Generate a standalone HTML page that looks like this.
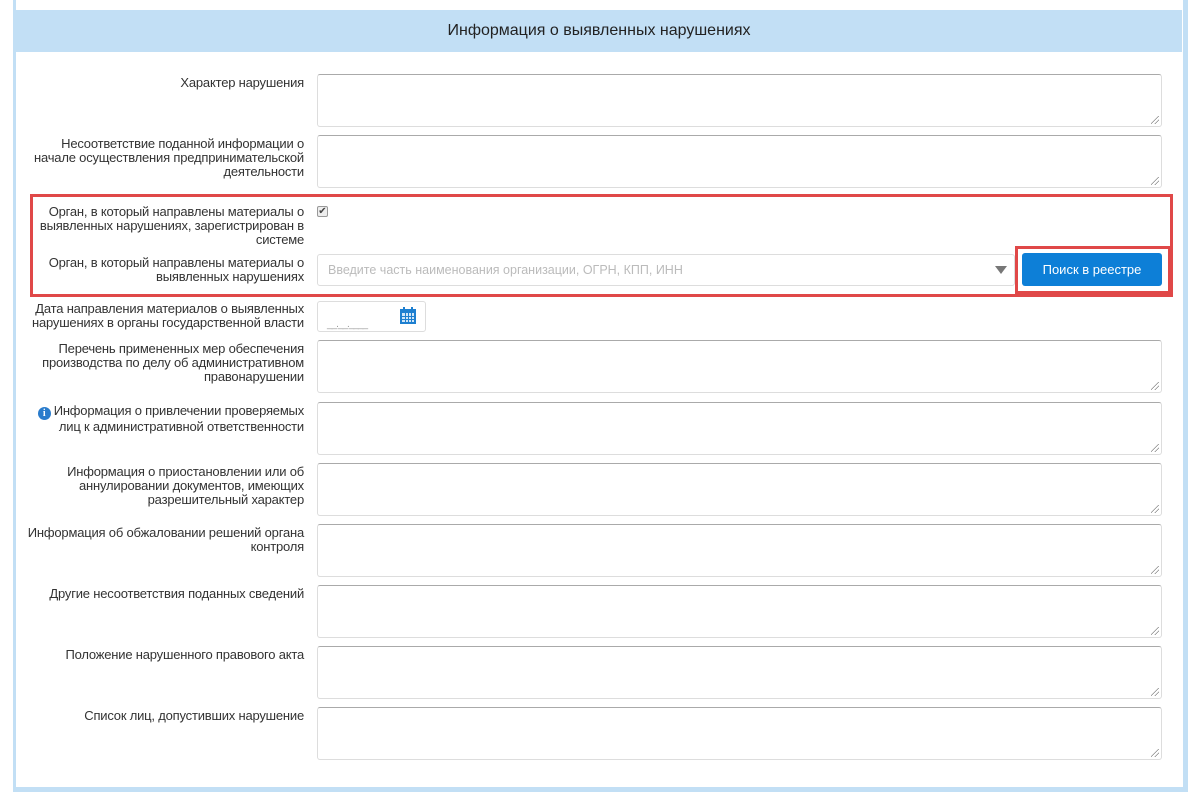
<!DOCTYPE html>
<html><head><meta charset="utf-8"><style>
*{box-sizing:border-box;margin:0;padding:0}
body{width:1188px;height:792px;background:#fff;position:relative;overflow:hidden;font-family:"Liberation Sans",sans-serif;color:#333}
.ob{position:absolute;background:#c2dff5}
.hdr{position:absolute;left:16px;top:10px;width:1166px;height:42px;background:#c2dff5;text-align:center;line-height:42px;font-size:16px;color:#222}
.lbl{position:absolute;right:884px;text-align:right;font-size:13px;line-height:14px;color:#333;white-space:nowrap;letter-spacing:-0.2px}
.ta{position:absolute;left:317px;width:845px;height:53px;border:1px solid #ddd;border-top-color:#aaa;border-radius:3px;background:#fff}
.ta::after{content:"";position:absolute;right:2px;bottom:2px;width:8px;height:8px;background:linear-gradient(135deg,transparent 45%,#888 45%,#888 52%,transparent 52%,transparent 70%,#888 70%,#888 77%,transparent 77%)}
.red{position:absolute;border:3px solid #e04848}
</style></head><body>
<div class="ob" style="left:13px;top:0;width:3px;height:792px"></div>
<div class="ob" style="left:1183px;top:0;width:5px;height:792px"></div>
<div class="ob" style="left:13px;top:787px;width:1175px;height:5px"></div>
<div class="hdr">Информация о выявленных нарушениях</div>

<div class="lbl" style="top:76px">Характер нарушения</div>
<div class="ta" style="top:74px"></div>

<div class="lbl" style="top:137px">Несоответствие поданной информации о<br>начале осуществления предпринимательской<br>деятельности</div>
<div class="ta" style="top:135px"></div>

<div class="red" style="left:30px;top:194px;width:1143px;height:103px"></div>
<div class="lbl" style="top:205px">Орган, в который направлены материалы о<br>выявленных нарушениях, зарегистрирован в<br>системе</div>
<div style="position:absolute;left:317px;top:206px;width:11px;height:11px;border:1px solid #999;border-radius:2px;background:#eee;font-size:10px;line-height:9px;text-align:center;color:#444">✔</div>
<div class="lbl" style="top:256px">Орган, в который направлены материалы о<br>выявленных нарушениях</div>
<div style="position:absolute;left:317px;top:254px;width:698px;height:32px;border:1px solid #ddd;border-radius:3px;font-size:12.5px;line-height:30px;padding-left:10px;color:#bbb">Введите часть наименования организации, ОГРН, КПП, ИНН</div>
<div style="position:absolute;left:995px;top:266px;width:0;height:0;border-left:6px solid transparent;border-right:6px solid transparent;border-top:8px solid #777"></div>
<div class="red" style="left:1015px;top:246px;width:156px;height:48px"></div>
<div style="position:absolute;left:1022px;top:253px;width:140px;height:33px;background:#0d7fd7;border-radius:3px;color:#fff;font-size:13px;line-height:33px;text-align:center">Поиск в реестре</div>

<div class="lbl" style="top:302px">Дата направления материалов о выявленных<br>нарушениях в органы государственной власти</div>
<div style="position:absolute;left:317px;top:301px;width:109px;height:31px;border:1px solid #ddd;border-radius:3px"></div>
<div style="position:absolute;left:327px;top:319px;font-size:10px;color:#999;letter-spacing:-1px">__.__.____</div>
<svg style="position:absolute;left:400px;top:307px" width="16" height="17" viewBox="0 0 16 17"><rect x="0" y="2" width="16" height="15" fill="#1d7fd0"/><rect x="3" y="0" width="2" height="4" fill="#1d7fd0"/><rect x="11" y="0" width="2" height="4" fill="#1d7fd0"/><g fill="#cfe5f7"><rect x="2" y="6" width="12" height="9"/></g><g fill="#1d7fd0"><rect x="5" y="6" width="1" height="9"/><rect x="8" y="6" width="1" height="9"/><rect x="11" y="6" width="1" height="9"/><rect x="2" y="9" width="12" height="1"/><rect x="2" y="12" width="12" height="1"/></g></svg>

<div class="lbl" style="top:342px">Перечень примененных мер обеспечения<br>производства по делу об административном<br>правонарушении</div>
<div class="ta" style="top:340px"></div>

<div class="lbl" style="top:404px"><span style="display:inline-block;width:13px;height:13px;border-radius:50%;background:#2a7ccc;color:#fff;font-size:10px;line-height:13px;text-align:center;font-weight:bold;font-family:'Liberation Serif',serif;vertical-align:-1px;margin-right:3px">i</span>Информация о привлечении проверяемых<br>лиц к административной ответственности</div>
<div class="ta" style="top:402px"></div>

<div class="lbl" style="top:465px">Информация о приостановлении или об<br>аннулировании документов, имеющих<br>разрешительный характер</div>
<div class="ta" style="top:463px"></div>

<div class="lbl" style="top:526px">Информация об обжаловании решений органа<br>контроля</div>
<div class="ta" style="top:524px"></div>

<div class="lbl" style="top:587px">Другие несоответствия поданных сведений</div>
<div class="ta" style="top:585px"></div>

<div class="lbl" style="top:648px">Положение нарушенного правового акта</div>
<div class="ta" style="top:646px"></div>

<div class="lbl" style="top:709px">Список лиц, допустивших нарушение</div>
<div class="ta" style="top:707px"></div>
</body></html>
